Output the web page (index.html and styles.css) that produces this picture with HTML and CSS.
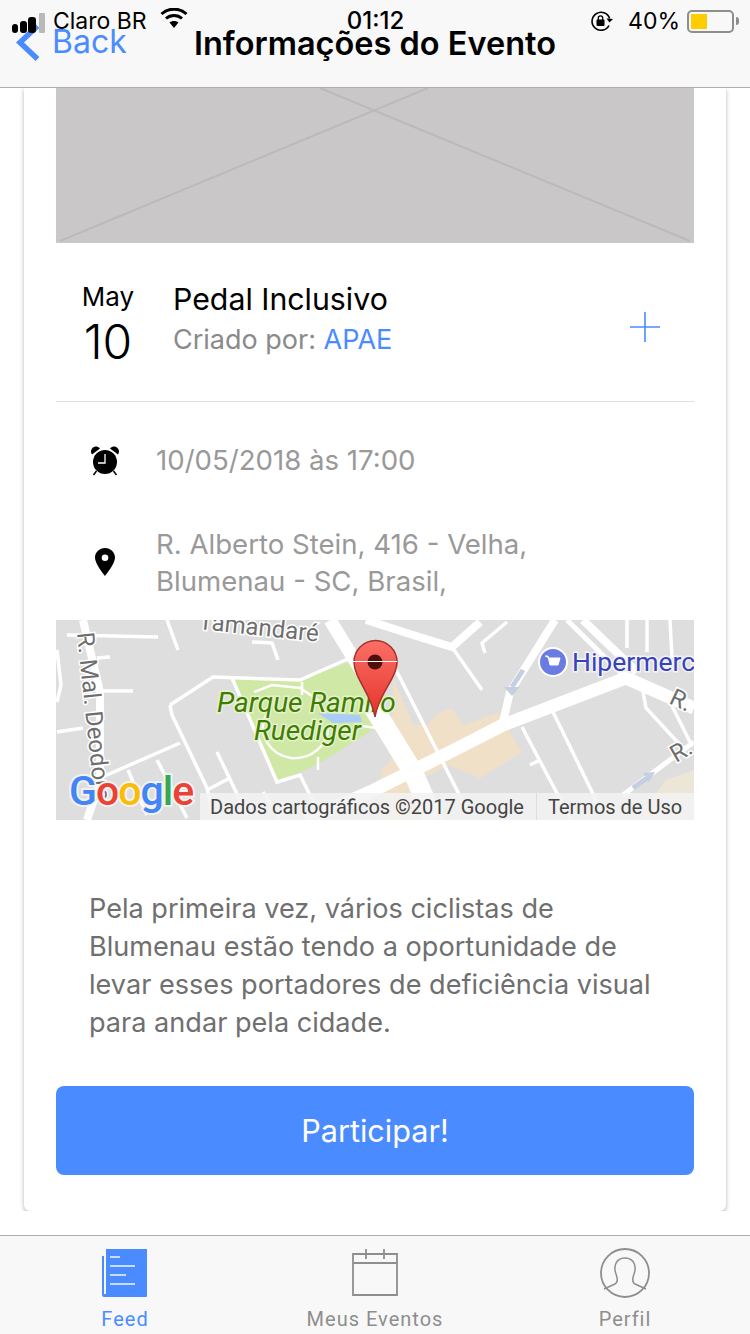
FILE: index.html
```html
<!DOCTYPE html>
<html lang="pt-BR">
<head>
    <meta charset="UTF-8">
    <meta name="viewport" content="width=device-width, initial-scale=1.0">
    <title>Informações do Evento</title>
    <link rel="stylesheet" href="styles.css">
</head>
<body>

<div class="phone">
    <!-- status bar sits on top of the nav bar -->
    <div class="status-bar">
        <div class="status-left">
            <svg class="signal" width="34" height="21" viewBox="0 0 34 21">
                <rect x="0" y="11" width="6" height="9" rx="3" fill="#000"/>
                <rect x="8" y="8" width="7" height="12" rx="3" fill="#000"/>
                <rect x="16" y="4" width="8" height="16" rx="3" fill="#000"/>
                <rect x="27" y="0" width="6" height="20" rx="1" fill="#b9b9b9"/>
            </svg>
            <span class="carrier">Claro BR</span>
            <svg class="wifi" width="28" height="20" viewBox="0 0 28 20">
                <path d="M14 20l-4.500-5.500c2.500-2 6.500-2 9 0z" fill="#000"/>
                <path d="M6 10.500c4.500-4 11.500-4 16 0" fill="none" stroke="#000" stroke-width="3"/>
                <path d="M1.500 6c7-6.500 18-6.500 25 0" fill="none" stroke="#000" stroke-width="3"/>
            </svg>
        </div>
        <span class="clock">01:12</span>
        <div class="status-right">
            <svg width="24" height="22" viewBox="0 0 24 22">
                <path d="M19 15.500a9 9 0 1 1 .6-7" fill="none" stroke="#000" stroke-width="1.600"/>
                <path d="M23 9l-3.500 3.500-3-4z" fill="#000"/>
                <rect x="6.500" y="9.500" width="8" height="6.500" rx="1" fill="#000"/>
                <path d="M8.300 10V8a2.200 2.200 0 0 1 4.400 0v2" fill="none" stroke="#000" stroke-width="1.300"/>
            </svg>
            <span class="battery-pct">40%</span>
            <div class="battery"><div class="battery-level"></div></div>
            <div class="battery-tip"></div>
        </div>
    </div>

    <header class="nav-bar">
        <a class="nav-back">
            <svg width="28" height="38" viewBox="0 0 28 38">
                <path d="M23.500 3L6 19.500 23.500 36" fill="none" stroke="#4a8cff" stroke-width="5.500"/>
            </svg>
            <span>Back</span>
        </a>
        <h1 class="nav-title">Informações do Evento</h1>
        <div></div>
    </header>

    <main class="content">
        <section class="card">
            <svg class="placeholder" viewBox="0 0 638 155" preserveAspectRatio="none">
                <rect width="638" height="155" fill="#c9c7c8"/>
                <path d="M4 153L372 0M634 153L264 0" stroke="#bbb9ba" stroke-width="2" fill="none"/>
            </svg>

            <div class="event-head">
                <div class="event-date">
                    <span class="event-month">May</span>
                    <span class="event-day">10</span>
                </div>
                <div class="event-info">
                    <div class="event-name">Pedal Inclusivo</div>
                    <div class="event-owner">Criado por: <span class="link">APAE</span></div>
                </div>
                <svg class="event-add" width="32" height="32" viewBox="0 0 32 32">
                    <path d="M16 1v30M1 16h30" stroke="#4a8cff" stroke-width="1.600" fill="none"/>
                </svg>
            </div>

            <div class="detail-row detail-time">
                <svg class="detail-icon" width="30" height="30" viewBox="0 0 30 30">
                    <circle cx="15" cy="16" r="12" fill="#000"/>
                    <path d="M2 8.500A5 5 0 0 1 10 2.500zM28 8.500A5 5 0 0 0 20 2.500z" fill="#000"/>
                    <path d="M6.500 25L3.500 29M23.500 25l3 4" stroke="#000" stroke-width="1.500"/>
                    <path d="M15 8v9H8" fill="none" stroke="#fff" stroke-width="1.300"/>
                </svg>
                <span>10/05/2018 às 17:00</span>
            </div>

            <div class="detail-row detail-place">
                <svg class="detail-icon detail-pin" width="30" height="32" viewBox="0 0 30 32">
                    <path fill-rule="evenodd" d="M15 2C9.500 2 5 6.300 5 11.500 5 18 15 30 15 30s10-12 10-18.500C25 6.300 20.500 2 15 2zm0 6.500a3.300 3.300 0 1 1 0 6.600 3.300 3.300 0 0 1 0-6.600z" fill="#000"/>
                </svg>
                <span>R. Alberto Stein, 416 - Velha,<br>Blumenau - SC, Brasil,</span>
            </div>

            <svg class="map" viewBox="0 0 638 200" width="638" height="200">
                <defs>
                    <linearGradient id="pinFill" x1="0" y1="0" x2="0" y2="1">
                        <stop offset="0" stop-color="#fb6f66"/>
                        <stop offset="1" stop-color="#e5342a"/>
                    </linearGradient>
                </defs>
                <rect width="638" height="200" fill="#dedede"/>

                <!-- park and built up area -->
                <path d="M176 58L244 60 294 42 324 105 274 137 250 150 221 162z" fill="#cfe8a5"/>
                <path d="M337 58L357 105 371 105 382 93 396 88 407 105 442 93 466 132 424 158 392 145 367 158 390 200H320L326 150 335 140z" fill="#f1e0c8"/>
                <path d="M578 200L610 160 638 150V200z" fill="#ece6d6"/>
                <path d="M262 93L304 95 306 102 277 103z" fill="#a9cdf8"/>

                <!-- small streets -->
                <g fill="none" stroke="#fff" stroke-width="3.500">
                    <path d="M11 15L102 17M111 0L122 30M196 22L216 23 222 40M41 38L54 37M44 71H77M1 112L27 108M1 30L5 65 1 82"/>
                    <path d="M114 85L157 57 244 60 294 38M114 85L116 95 151 168 157 195"/>
                    <path d="M44 158L124 123M72 150L91 195M101 140L131 198M151 170L174 158M161 132L191 195M207 172L224 198M176 58L221 162 244 155 264 195"/>
                    <path d="M396 27L426 70M451 2L426 23 429 33"/>
                    <path d="M339 48L410 188M466 107L514 198M497 92L541 182M571 0V28M591 0V32M614 0L616 38M587 72L590 88 627 128M614 82L634 122M474 145L484 140"/>
                </g>
                <g fill="none" stroke="#fff" stroke-width="2.500">
                    <path d="M198 72L216 65 244 68 262 80 M210 95C200 115 215 135 235 138 255 140 272 125 272 108 M246 62V75M262 137V150M300 105L320 108"/>
                </g>
                <!-- wide roads -->
                <g fill="none" stroke="#fff" stroke-width="20" stroke-linejoin="round">
                    <path d="M314 82L357 152 378 200"/>
                </g>
                <g fill="none" stroke="#fff" stroke-width="13">
                    <path d="M250 200L314 172 404 127 447 105 570 58 638 88"/>
                    <path d="M274 0L320 75"/>
                </g>
                <g fill="none" stroke="#fff" stroke-width="8">
                    <path d="M310 0L357 15 396 27 424 2M499 0L454 72 447 102M527 0L581 52M27 0L44 72V162L31 200"/>
                    <path d="M511 0L570 58" stroke-width="5"/>
                    <path d="M638 122L567 175" stroke-width="5"/>
                </g>
                <path d="M467 50L456 67" fill="none" stroke="#c4cfe2" stroke-width="5"/>
                <path d="M448 67h16l-8 9z" fill="#c4cfe2"/>
                <path d="M577 168L591 158" stroke="#c4cfe2" stroke-width="5"/>
                <path d="M587 153l12-1-6 10z" fill="#c4cfe2"/>

                <!-- labels -->
                <g class="map-label">
                    <text x="142" y="9" font-size="24" transform="rotate(6 142 9)">Tamandaré</text>
                    <text x="21" y="13" font-size="24" transform="rotate(84 21 13)">R. Mal. Deodoro</text>
                    <text x="612" y="83" font-size="24" transform="rotate(25 612 83)">R.</text>
                    <text x="620" y="143" font-size="24" transform="rotate(-30 620 143)">R.</text>
                </g>
                <g class="map-park">
                    <text x="161" y="92" font-size="28">Parque Ramiro</text>
                    <text x="198" y="120" font-size="28">Ruediger</text>
                </g>
                <circle cx="497" cy="42" r="14" fill="#6b7be4" stroke="#fff" stroke-width="2"/>
                <path d="M489 36h3l2 9h8l2-7h-12" fill="#fff" stroke="#fff" stroke-width="1"/>
                <text class="map-shop" x="516" y="51" font-size="26.500">Hipermercado</text>

                <!-- marker -->
                <path d="M319 97C316 75 298 58 298 42A21.500 21.500 0 0 1 341 42C341 58 322 75 319 97z" fill="url(#pinFill)" stroke="#a8322a" stroke-width="1.500"/>
                <circle cx="319" cy="42" r="7.500" fill="#4f0f0a"/>
                <path d="M297 41.500H341" stroke="#fff" stroke-width="1"/>

                <!-- google logo and legal strip -->
                <text class="map-logo" x="13" y="185" font-size="41"><tspan fill="#4285f4">G</tspan><tspan fill="#ea4335">o</tspan><tspan fill="#fbbc05">o</tspan><tspan fill="#4285f4">g</tspan><tspan fill="#34a853">l</tspan><tspan fill="#ea4335">e</tspan></text>
                <rect x="144" y="173" width="494" height="27" fill="#f3f3f3" fill-opacity="0.88"/>
                <path d="M480.500 173v27" stroke="#ddd" stroke-width="1"/>
                <text class="map-legal" x="154" y="194" font-size="20">Dados cartográficos ©2017 Google</text>
                <text class="map-legal" x="492" y="194" font-size="20">Termos de Uso</text>
            </svg>

            <p class="description">Pela primeira vez, vários ciclistas de Blumenau estão tendo a oportunidade de levar esses portadores de deficiência visual para andar pela cidade.</p>

            <button class="join-btn">Participar!</button>
        </section>
    </main>

    <nav class="tab-bar">
        <div class="tab tab-active">
            <svg class="tab-feed" width="48" height="50" viewBox="0 0 48 50">
                <path d="M5 8H3v39a2 2 0 0 0 2 2h42a1 1 0 0 0 1-1V1H7v45H5z" fill="#4a8cff"/>
                <path d="M11 9h10M11 18h25M11 27h16M11 36h25" stroke="#f3f6ff" stroke-width="1.500" fill="none"/>
            </svg>
            <span>Feed</span>
        </div>
        <div class="tab">
            <svg width="48" height="50" viewBox="0 0 48 50">
                <path d="M2 6h44v41H2zM2 15h44M15 1v10M33 1v10" fill="none" stroke="#8e8e8e" stroke-width="1.800"/>
            </svg>
            <span>Meus Eventos</span>
        </div>
        <div class="tab">
            <svg width="50" height="50" viewBox="0 0 50 50">
                <ellipse cx="25" cy="25" rx="24" ry="24" fill="none" stroke="#8e8e8e" stroke-width="1.800"/>
                <path d="M4 41l11-5c4-2 2-7 1-10-2-5-2-16 9-16s11 11 9 16c-1 3-3 8 1 10l11 5" fill="none" stroke="#8e8e8e" stroke-width="1.500"/>
            </svg>
            <span>Perfil</span>
        </div>
    </nav>
</div>

</body>
</html>
```

FILE: styles.css
```css
* {
    box-sizing: border-box;
}

body {
    margin: 0;
    font-family: Inter, Roboto, sans-serif;
    background: #fff;
}

.phone {
    position: relative;
    width: 750px;
    height: 1334px;
    display: flex;
    flex-direction: column;
    overflow: hidden;
}

/* status bar */
.status-bar {
    position: absolute;
    top: 7px;
    left: 12px;
    right: 11px;
    height: 30px;
    display: flex;
    justify-content: space-between;
    align-items: flex-start;
    color: #000;
    font-size: 23px;
    z-index: 2;
}

.status-left,
.status-right {
    width: 300px;
    display: flex;
    align-items: center;
    height: 28px;
}

.status-right {
    justify-content: flex-end;
}

.signal {
    margin-right: 7px;
    margin-top: 4px;
}

.carrier {
    margin-right: 13px;
}

.wifi {
    margin-top: -6px;
}

.clock {
    font-weight: 500;
    font-size: 24px;
    line-height: 28px;
}

.battery-pct {
    margin: 0 7px 0 14px;
    font-size: 23px;
}

.battery {
    width: 47px;
    height: 23px;
    border: 2px solid #8e8e8e;
    border-radius: 5px;
    padding: 2px;
}

.battery-level {
    width: 16px;
    height: 15px;
    background: #ffcc00;
}

.battery-tip {
    width: 3px;
    height: 8px;
    margin-left: 2px;
    background: #8e8e8e;
    border-radius: 0 3px 3px 0;
}

/* nav bar */
.nav-bar {
    height: 88px;
    flex-shrink: 0;
    background: #f8f8f8;
    border-bottom: 1px solid #adadad;
    display: grid;
    grid-template-columns: 1fr auto 1fr;
    align-items: start;
    padding-top: 22px;
}

.nav-back {
    display: flex;
    align-items: center;
    gap: 10px;
    padding-left: 14px;
    color: #4a8cff;
    font-size: 32px;
    line-height: 40px;
}

.nav-title {
    margin: 0;
    font-size: 32.500px;
    line-height: 44px;
    font-weight: 600;
    color: #000;
}

/* card */
.content {
    flex: 1;
    padding: 0 24px;
    overflow: hidden;
}

.card {
    height: 1123px;
    padding: 0 32px;
    background: #fff;
    border-radius: 0 0 6px 6px;
    box-shadow: 0 2px 4px rgba(0, 0, 0, 0.3);
    display: flex;
    flex-direction: column;
}

.placeholder {
    display: block;
    width: 638px;
    height: 155px;
    flex-shrink: 0;
}

.event-head {
    height: 159px;
    flex-shrink: 0;
    display: flex;
    align-items: center;
    border-bottom: 1px solid #dedede;
}

.event-date {
    width: 104px;
    margin-right: 13px;
    display: flex;
    flex-direction: column;
    align-items: center;
    color: #000;
    margin-top: 6px;
}

.event-month {
    font-size: 26px;
    line-height: 34px;
}

.event-day {
    font-size: 48px;
    font-weight: 300;
    line-height: 56px;
}

.event-info {
    flex: 1;
    margin-top: -5px;
}

.event-name {
    font-size: 30.300px;
    line-height: 40px;
    color: #000;
}

.event-owner {
    font-size: 27px;
    line-height: 42px;
    color: #8a8a8a;
}

.link {
    color: #4a8cff;
}

.event-add {
    margin-right: 33px;
    margin-top: 10px;
}

.detail-row {
    display: flex;
    align-items: center;
    color: #999;
    font-size: 27.600px;
    line-height: 37px;
}

.detail-icon {
    margin: 0 36px 0 34px;
    flex-shrink: 0;
}

.detail-pin {
    margin-top: -2px;
}

.detail-time {
    margin-top: 40px;
}

.detail-place {
    margin-top: 47px;
}

.map {
    display: block;
    flex-shrink: 0;
    margin-top: 20px;
}

.map text {
    font-family: Roboto, sans-serif;
}

.map-label {
    fill: #6e6e6e;
    stroke: #fff;
    stroke-width: 3px;
    paint-order: stroke;
}

.map-park {
    fill: #3f7d00;
    font-style: italic;
    stroke: #e6f2cf;
    stroke-width: 3px;
    paint-order: stroke;
}

.map-shop {
    fill: #3742bd;
    stroke: #f4f4f4;
    stroke-width: 3px;
    paint-order: stroke;
}

.map-logo {
    font-weight: 500;
    letter-spacing: -1px;
    stroke: #f2f2f2;
    stroke-width: 4px;
    paint-order: stroke;
}

.map-legal {
    fill: #444;
}

.description {
    margin: 70px 32px 0 33px;
    font-size: 27.100px;
    line-height: 38px;
    color: #6f6f6f;
}

.join-btn {
    margin-top: 44px;
    height: 89px;
    flex-shrink: 0;
    border: none;
    border-radius: 8px;
    background: #4a8cff;
    color: #fff;
    font-family: inherit;
    font-size: 30.600px;
}

/* tab bar */
.tab-bar {
    height: 99px;
    flex-shrink: 0;
    margin-top: 24px;
    background: #f8f8f8;
    border-top: 1px solid #adadad;
    display: grid;
    grid-template-columns: repeat(3, 250px);
}

.tab {
    display: flex;
    flex-direction: column;
    align-items: center;
    padding-top: 12px;
    color: #8e8e8e;
    font-family: Roboto, sans-serif;
    font-size: 20px;
    letter-spacing: 1px;
}

.tab span {
    margin-top: 9px;
    line-height: 24px;
}

.tab-feed {
    margin-left: -4px;
}

.tab-active {
    color: #4a8cff;
}
```
